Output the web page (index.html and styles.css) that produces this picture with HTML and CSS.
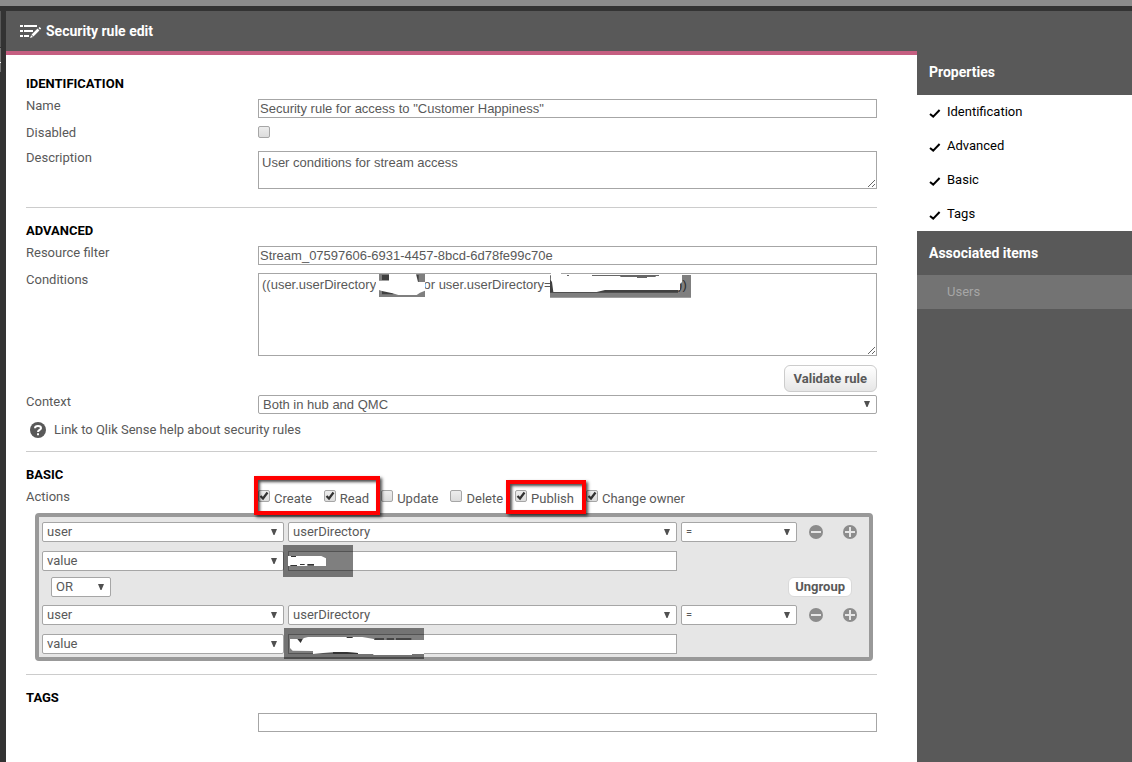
FILE: index.html
```html
<!DOCTYPE html>
<html lang="en">
<head>
<meta charset="utf-8">
<title>Security rule edit</title>
<link rel="stylesheet" href="styles.css">
</head>
<body>
<svg class="defs" aria-hidden="true">
  <symbol id="check" viewBox="0 0 12 10"><path d="M1 5l3.200 2.600L10.600 1" fill="none" stroke="currentColor" stroke-width="2"/></symbol>
  <symbol id="minus" viewBox="0 0 14 14"><circle cx="7" cy="7" r="7" fill="#8c8c8c"/><path d="M2 7h10" stroke="#e6e6e6" stroke-width="2"/></symbol>
  <symbol id="plus" viewBox="0 0 14 14"><circle cx="7" cy="7" r="7" fill="#8c8c8c"/><path d="M2 7h10M7 2v10" stroke="#e6e6e6" stroke-width="2"/></symbol>
</svg>
<div class="topbar"></div>
<div class="app">
  <header class="header">
    <svg class="header-icon" width="22" height="14" viewBox="0 0 22 14" aria-hidden="true">
      <path d="M0 2h3M0 7h3M0 12h3M4 2h13M4 7h9M4 12h5" stroke="#fff" stroke-width="2"/>
      <path d="M12.500 11.500L18.500 5.500" stroke="#fff" stroke-width="2.600"/>
      <path d="M18.500 4l1.200-1 1.500 1.500-1.200 1.200zM11.200 11.200l1.800 1.800-3 1z" fill="#fff"/>
    </svg>
    <h1>Security rule edit</h1>
  </header>
  <div class="body">
    <main class="form">
      <section class="section section--first">
        <h2>IDENTIFICATION</h2>
        <div class="row"><label for="name">Name</label><input class="text" id="name" type="text" value='Security rule for access to "Customer Happiness"'></div>
        <div class="row row--check"><label for="disabled">Disabled</label><input class="tick" id="disabled" type="checkbox"></div>
        <div class="row"><label for="desc">Description</label><textarea class="area" id="desc">User conditions for stream access</textarea></div>
      </section>
      <section class="section section--help">
        <h2>ADVANCED</h2>
        <div class="row"><label for="filter">Resource filter</label><input class="text" id="filter" type="text" value="Stream_07597606-6931-4457-8bcd-6d78fe99c70e"></div>
        <div class="row"><label for="cond">Conditions</label>
          <div class="covered">
            <textarea class="area area--tall" id="cond">((user.userDirectory =&nbsp;&nbsp;&nbsp;&nbsp;&nbsp;&nbsp;&nbsp;&nbsp;&nbsp;&nbsp;or user.userDirectory=&nbsp;&nbsp;&nbsp;&nbsp;&nbsp;&nbsp;&nbsp;&nbsp;&nbsp;&nbsp;&nbsp;&nbsp;&nbsp;&nbsp;&nbsp;&nbsp;&nbsp;&nbsp;&nbsp;&nbsp;&nbsp;&nbsp;&nbsp;&nbsp;&nbsp;&nbsp;&nbsp;&nbsp;&nbsp;&nbsp;&nbsp;&nbsp;&nbsp;&nbsp;&nbsp;))</textarea>
            <svg class="mask mask--cond" width="350" height="60" viewBox="0 0 1050 180" aria-hidden="true">
              <path d="M57 42H195V111H57zM570 45H993V113H570z" fill="#000" fill-opacity=".5"/>
              <path d="M66 45h21v15H66zM168 45h8v20h-8zM66 90l34 9v4H66zM570 48h9v50h-9zM579 90H954V98H579z" fill="#404040"/>
              <path d="M48 62H87V42H168L174 66H195V92L180 98L170 105H115L98 100L66 93L57 90H48z" fill="#fff"/>
              <path d="M573 37H603V45H966V66L960 72V90H735L710 96H580L576 66L572 60z" fill="#fff"/>
              <path d="M621 45h6v3h-6zM696 45h201v3h-10v3h-26v3h-30v-3h-50v-3h-85z" fill="#666"/>
            </svg>
          </div>
        </div>
        <div class="validate"><button class="btn" type="button">Validate rule</button></div>
        <div class="row row--tight"><label for="context">Context</label><select class="select select--context" id="context"><option>Both in hub and QMC</option></select></div>
        <a class="help" href="#help">
          <svg width="16" height="16" viewBox="0 0 16 16" aria-hidden="true"><circle cx="8" cy="8" r="8" fill="#595959"/><path d="M5 6.200C5 3.200 11 3.200 11 6.200C11 8 8 7.800 8 10" fill="none" stroke="#fff" stroke-width="2"/><path d="M7 11.300h2v2H7z" fill="#fff"/></svg>
          <span>Link to Qlik Sense help about security rules</span>
        </a>
      </section>
      <section class="section section--basic">
        <h2>BASIC</h2>
        <div class="row"><span class="label">Actions</span>
          <div class="actions">
            <div class="marked">
              <label><input class="tick" type="checkbox" checked>Create</label>
              <label><input class="tick" type="checkbox" checked>Read</label>
            </div>
            <label><input class="tick" type="checkbox">Update</label>
            <label><input class="tick" type="checkbox">Delete</label>
            <div class="marked marked--single">
              <label><input class="tick" type="checkbox" checked>Publish</label>
            </div>
            <label><input class="tick" type="checkbox" checked>Change owner</label>
          </div>
        </div>
        <div class="group">
          <div class="rule">
            <select class="select" aria-label="Subject"><option>user</option></select>
            <select class="select" aria-label="Property"><option>userDirectory</option></select>
            <select class="select select--op" aria-label="Operator"><option>=</option></select>
            <div class="tools"><button type="button" aria-label="Remove"><svg width="14" height="14"><use href="#minus"/></svg></button><button type="button" aria-label="Add"><svg width="14" height="14"><use href="#plus"/></svg></button></div>
            <select class="select" aria-label="Value type"><option>value</option></select>
            <div class="covered">
              <input class="text text--rule" type="text" aria-label="Value">
              <svg class="mask mask--first" width="70" height="32" viewBox="0 0 210 96" aria-hidden="true">
                <path d="M0 0h210v96H0z" fill="#000" fill-opacity=".5"/>
                <path d="M15 33H115L129 40V63H15z" fill="#fff"/>
                <path d="M24 33h15v3H24zM22 60h20v3H22zM51 57h14v3H51zM73 57h20v5H73z" fill="#333"/>
              </svg>
            </div>
          </div>
          <div class="joiner">
            <select class="select select--or" aria-label="Join"><option>OR</option></select>
            <button class="btn btn--small" type="button">Ungroup</button>
          </div>
          <div class="rule">
            <select class="select" aria-label="Subject"><option>user</option></select>
            <select class="select" aria-label="Property"><option>userDirectory</option></select>
            <select class="select select--op" aria-label="Operator"><option>=</option></select>
            <div class="tools"><button type="button" aria-label="Remove"><svg width="14" height="14"><use href="#minus"/></svg></button><button type="button" aria-label="Add"><svg width="14" height="14"><use href="#plus"/></svg></button></div>
            <select class="select" aria-label="Value type"><option>value</option></select>
            <div class="covered">
              <input class="text text--rule" type="text" aria-label="Value">
              <svg class="mask mask--second" width="140" height="31" viewBox="0 0 420 93" aria-hidden="true">
                <path d="M0 0h420v93H0z" fill="#000" fill-opacity=".5"/>
                <path d="M18 33H42L48 40L60 30L72 27H235L270 33V36H420V78H384V81H268V78H222V75L147 72L87 78V69L26 68L18 60z" fill="#fff"/>
                <path d="M40 33h16l-6 12zM272 31h28v4h-28zM308 31h22v4h-22zM336 31h46v4h-46zM188 27h18v3h-18zM147 72h42l33 3v3h-75z" fill="#333"/>
              </svg>
            </div>
          </div>
        </div>
      </section>
      <section class="section section--last">
        <h2><label for="tags">TAGS</label></h2>
        <div class="row"><span></span><input class="text" id="tags" type="text"></div>
      </section>
    </main>
    <aside class="side">
      <h2 class="side-title side-title--first">Properties</h2>
      <ul class="props">
        <li><button type="button"><svg width="12" height="10"><use href="#check"/></svg>Identification</button></li>
        <li><button type="button"><svg width="12" height="10"><use href="#check"/></svg>Advanced</button></li>
        <li><button type="button"><svg width="12" height="10"><use href="#check"/></svg>Basic</button></li>
        <li><button type="button"><svg width="12" height="10"><use href="#check"/></svg>Tags</button></li>
      </ul>
      <h2 class="side-title">Associated items</h2>
      <button class="users" type="button" disabled>Users</button>
    </aside>
  </div>
</div>
</body>
</html>
```
FILE: styles.css
```css
* { box-sizing: border-box; }
html { height: 100%; }
body {
  margin: 0;
  min-height: 100%;
  display: flex;
  flex-direction: column;
  background: #333;
  color: #595959;
  font: 13px/16px Roboto, "Liberation Sans", sans-serif;
}
h1, h2, ul { margin: 0; padding: 0; }
button, input, select, textarea { margin: 0; font: inherit; color: inherit; }
.defs { position: absolute; width: 0; height: 0; }
.topbar { height: 6px; background: #8c8c8c; }
.app {
  flex: 1;
  display: flex;
  flex-direction: column;
  padding: 5px 0 0 6px;
  background: linear-gradient(#595959 36px, #333 36px 37px, #737373 37px 51px, #fff 51px 52px, #737373 52px 61px, transparent 61px) 0 5px / 1px 61px no-repeat;
}
.header {
  height: 40px;
  padding: 0 14px;
  display: flex;
  align-items: center;
  gap: 4px;
  background: #595959;
}
.header h1 { font-size: 14px; line-height: 16px; font-weight: 700; color: #fff; }
.body { flex: 1; display: flex; }
.form {
  flex: 1;
  min-width: 0;
  padding: 0 40px 28px 20px;
  border-top: 4px solid #c55f81;
  background: #fff;
}
.section { padding: 15px 0 18px; border-bottom: 1px solid #ccc; }
.section--first { padding-top: 21px; }
.section--help { padding-bottom: 13px; }
.section--basic { padding-bottom: 13px; }
.section--last { border-bottom: 0; }
.section h2 { margin-bottom: 6px; font-size: 13px; line-height: 16px; color: #000; }
.row {
  display: grid;
  grid-template-columns: 232px minmax(0, 1fr);
  align-items: start;
  margin-top: 7px;
}
h2 + .row { margin-top: 0; }
.row--check { min-height: 18px; }
.row--tight { margin-top: 2px; }
.row > :nth-child(2) { margin-top: 1px; }
.text, .area {
  display: block;
  width: 100%;
  border: 1px solid #a6a6a6;
  border-radius: 0;
  background: #fff;
  font-family: "Liberation Sans", Arial, sans-serif;
  font-size: 13px;
}
.text { height: 19px; padding: 0 1px; }
.text--rule { height: 20px; }
.area { height: 38px; padding: 3px; line-height: 16px; resize: both; }
.area--tall { height: 83px; }
.covered { position: relative; }
.mask { position: absolute; pointer-events: none; }
.mask--cond { left: 102px; top: -13px; }
.mask--first { left: -5px; top: -6px; }
.mask--second { left: -4px; top: -6px; }
.tick {
  appearance: none;
  width: 12px;
  height: 12px;
  border: 1px solid #a6a6a6;
  border-radius: 2px;
  background: linear-gradient(#ededed, #dcdcdc);
}
.tick:checked {
  background: url("data:image/svg+xml,%3Csvg xmlns='http://www.w3.org/2000/svg' viewBox='0 0 10 10'%3E%3Cpath d='M1.500 5l2.500 2.500L8.500 1.500' fill='none' stroke='%23333' stroke-width='2.200'/%3E%3C/svg%3E") center / 10px no-repeat, linear-gradient(#ededed, #dcdcdc);
}
.select {
  appearance: none;
  display: block;
  width: 100%;
  height: 20px;
  padding: 0 4px;
  border: 1px solid #a6a6a6;
  border-radius: 2px;
  background: #fff url("data:image/svg+xml,%3Csvg xmlns='http://www.w3.org/2000/svg' viewBox='0 0 6 6'%3E%3Cpath d='M0 0h6L3.500 6h-1z' fill='%23505050'/%3E%3C/svg%3E") right 6px top 6px / 6px 6px no-repeat;
}
.select--context { height: 19px; background-position: right 6px top 5px; font-family: "Liberation Sans", Arial, sans-serif; }
.select--op { font-size: 11px; }
.select--or { width: 60px; }
.validate { display: flex; justify-content: flex-end; margin-top: 9px; }
.btn {
  height: 27px;
  padding: 0 9px;
  border: 1px solid #ccc;
  border-radius: 6px;
  background: linear-gradient(#fff, #e6e6e6);
  font-weight: 700;
}
.btn--small { height: 20px; padding: 0 6px; border-color: #d9d9d9; background: #fff; }
.help {
  display: flex;
  align-items: center;
  gap: 8px;
  margin: 8px 0 0 4px;
  color: inherit;
  text-decoration: none;
}
.actions, .marked { display: flex; gap: 12px; }
.actions label { display: flex; gap: 4px; white-space: nowrap; line-height: 17px; height: 15px; }
.marked { position: relative; }
.marked::after {
  content: "";
  position: absolute;
  inset: -14px -11px -10px -4px;
  border: 4px solid #f00;
  box-shadow: 2px 2px 3px rgba(0, 0, 0, .7), inset 2px 2px 3px rgba(0, 0, 0, .7);
  pointer-events: none;
}
.marked--single::after { inset: -10px -12px -9px -9px; }
.group {
  margin: 8px 4px 0 9px;
  padding: 5px 0 3px 3px;
  border: 4px solid #999;
  border-radius: 4px;
  background: #e6e6e6;
}
.rule {
  display: grid;
  grid-template-columns: minmax(0, 242fr) minmax(0, 389fr) minmax(0, 116fr) 68px;
  gap: 9px 4px;
}
.tools { display: flex; align-items: center; gap: 20px; padding-left: 8px; }
.tools button { display: flex; padding: 0; border: 0; background: none; }
.joiner { display: flex; justify-content: space-between; margin: 6px 17px 8px 9px; }
.side { width: 215px; background: #595959; color: #000; }
.side-title { padding: 14px 12px; height: 44px; font-size: 14px; line-height: 16px; color: #fff; }
.side-title--first { padding-top: 13px; }
.props { list-style: none; background: #fff; }
.props button {
  display: flex;
  align-items: center;
  gap: 6px;
  width: 100%;
  height: 34px;
  padding: 0 12px;
  border: 0;
  background: none;
}
.props svg { margin-top: 3px; }
.users {
  width: 100%;
  height: 34px;
  padding: 0 30px;
  border: 0;
  background: #737373;
  color: #a6a6a6;
  text-align: left;
}
```
